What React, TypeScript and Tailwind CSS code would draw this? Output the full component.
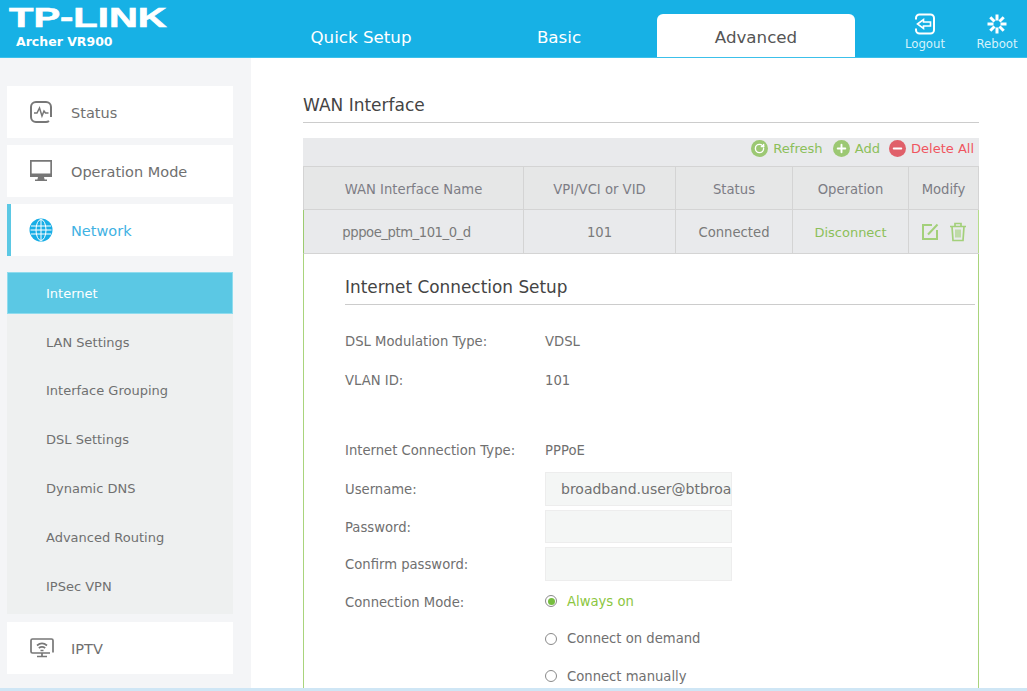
import { Minus, Plus, RotateCw } from 'lucide-react'

const font = "font-['DejaVu_Sans',sans-serif]"

function StatusIcon() {
  return (
    <svg width="24" height="24" viewBox="0 0 24 24" fill="none" stroke="#777" strokeWidth="2">
      <path d="M22 17V7a5 5 0 0 0-5-5H7a5 5 0 0 0-5 5v10a5 5 0 0 0 5 5h10a5 5 0 0 0 3-1" />
      <path d="M5 13h3l2.500-5 2.500 8 2-5 1.500 2h3" strokeWidth="1.500" />
    </svg>
  )
}

function MonitorIcon() {
  return (
    <svg width="24" height="24" viewBox="0 0 24 24" fill="#777">
      <path d="M1 1h22v17H1zM2.700 2.700v12.600h18.600V2.700z" fillRule="evenodd" />
      <rect x="2" y="14.500" width="20" height="3.500" />
      <path d="M9 18h6l.6 2.500h2.400v1.500H6v-1.500h2.400z" />
    </svg>
  )
}

function GlobeIcon() {
  return (
    <svg width="24" height="24" viewBox="0 0 24 24" fill="#18aee6" stroke="#fff" strokeWidth="1">
      <circle cx="12" cy="12" r="11.500" stroke="none" />
      <ellipse cx="12" cy="12" rx="5" ry="10.500" fill="none" />
      <path d="M12 1.500v21M2 8h20M1.500 12h21M2 16h20" fill="none" />
    </svg>
  )
}

function IptvIcon() {
  return (
    <svg width="26" height="20" viewBox="0 0 26 20" fill="none" stroke="#777" strokeWidth="1.700">
      <path d="M24 14.500V2.500a1.500 1.500 0 0 0-1.500-1.500h-19A1.500 1.500 0 0 0 2 2.500v11a1.500 1.500 0 0 0 1.500 1.500H21" />
      <path d="M13 15v3M8 18.500h10M8 7.500c3-2.500 7-2.500 10 0M9.800 10c2-1.500 4.400-1.500 6.400 0M11.500 12.500h3" />
    </svg>
  )
}

function LogoutIcon() {
  return (
    <svg width="22" height="22" viewBox="0 0 22 22" fill="none" stroke="#fff" strokeWidth="2">
      <path d="M2 6.500V5a3.500 3.500 0 0 1 3.500-3.500h11A3.500 3.500 0 0 1 20 5v12a3.500 3.500 0 0 1-3.500 3.500h-11A3.500 3.500 0 0 1 2 17v-1.500" />
      <path d="M3.500 11l6-4.500V9h7v4h-7v2.500z" strokeWidth="1.600" />
    </svg>
  )
}

function RebootIcon() {
  const angles = [0, 45, 90, 135, 180, 225, 270, 315]
  return (
    <svg width="22" height="22" viewBox="0 0 22 22" stroke="#fff" strokeWidth="3">
      {angles.map((a) => (
        <path key={a} d="M11 1.500v6" transform={`rotate(${a} 11 11)`} />
      ))}
    </svg>
  )
}

function EditIcon() {
  return (
    <svg width="18" height="18" viewBox="0 0 18 18" fill="none" stroke="#a3d07a" strokeWidth="2">
      <path d="M11 2H2v14h14V7" />
      <path d="M7 11.500L16.500 1.500" />
    </svg>
  )
}

function TrashIcon() {
  return (
    <svg width="18" height="20" viewBox="0 0 18 20" fill="none" stroke="#a3d07a" strokeWidth="1.700">
      <path d="M1 4.500h16M6 4.500V1.500h6v3M3 4.500l1 14h10l1-14" />
      <path d="M7 7.500v8M9 7.500v8M11 7.500v8" strokeWidth="1.200" />
    </svg>
  )
}

function SideItem({ label, icon, active }: { label: string; icon: React.ReactNode; active?: boolean }) {
  return (
    <div
      className={`h-[52px] bg-white flex items-center text-[14.500px] ${
        active ? 'border-l-4 border-[#5bc8e4] pl-[18px] text-[#3fb2e3]' : 'pl-[22px] text-[#707070]'
      }`}
    >
      <span className="w-[42px] flex items-center">{icon}</span>
      <span className="pt-[3px]">{label}</span>
    </div>
  )
}

function Th({ className, children }: { className: string; children: React.ReactNode }) {
  return <div className={`shrink-0 flex items-center justify-center pt-[3px] border-r border-[#d4d4d4] ${className}`}>{children}</div>
}

function FormRow({ label, className, children }: { label: string; className: string; children?: React.ReactNode }) {
  return (
    <div className={`flex items-center ${className}`}>
      <span className="w-[200px] shrink-0 pt-[2px]">{label}</span>
      {children}
    </div>
  )
}

function Radio({ label, checked }: { label: string; checked?: boolean }) {
  return (
    <span className={`flex items-center gap-[10px] ${checked ? 'text-[#8cc63f]' : ''}`}>
      <span className="w-3 h-3 rounded-full border border-[#8a8a8a] bg-white flex items-center justify-center">
        {checked && <span className="w-[7px] h-[7px] rounded-full bg-[#76bd3f]" />}
      </span>
      {label}
    </span>
  )
}

const subMenu = ['Internet', 'LAN Settings', 'Interface Grouping', 'DSL Settings', 'Dynamic DNS', 'Advanced Routing', 'IPSec VPN']

export default function App() {
  return (
    <div className={`${font} relative w-[1027px] h-[691px] overflow-hidden bg-white flex flex-col`}>
      {/* top bar */}
      <header className="h-[58px] shrink-0 bg-[#17b1e5] border-b border-[#3cc0ea] flex items-end text-white">
        <div className="w-[250px] shrink-0 self-stretch pl-[9px] pt-[3px]">
          <div className="font-['Liberation_Sans',sans-serif] font-bold text-[27px] leading-[30px] [-webkit-text-stroke:0.600px_white] scale-x-[1.480] origin-left">
            TP-LINK
          </div>
          <div className="pl-[7px] text-[12.500px] leading-[18px] font-bold">Archer VR900</div>
        </div>
        <div className="w-[407px] shrink-0 flex text-[16.700px] h-[43px] pt-[4px]">
          <div className="w-[222px] flex items-center justify-center">Quick Setup</div>
          <div className="w-[174px] flex items-center justify-center">Basic</div>
        </div>
        <div className="w-[198px] shrink-0 h-[43px] pt-[4px] bg-white rounded-t-md text-[#555] text-[16.700px] flex items-center justify-center">
          Advanced
        </div>
        <div className="flex self-stretch text-[11.700px] pl-[34px]">
          <div className="w-[72px] shrink-0 flex flex-col items-center pt-[13px] gap-[2px]">
            <LogoutIcon />
            <span className="leading-[14px] text-[#d6f1fb]">Logout</span>
          </div>
          <div className="w-[66px] shrink-0 pl-[6px] flex flex-col items-center pt-[13px] gap-[2px]">
            <RebootIcon />
            <span className="leading-[14px] text-[#d6f1fb]">Reboot</span>
          </div>
        </div>
      </header>

      <div className="flex flex-1 min-h-0">
        {/* side menu */}
        <aside className="w-[251px] shrink-0 bg-[#f4f5f7] pl-[7px] pr-[18px] pt-[28px] flex flex-col">
          <div className="flex flex-col gap-[7px]">
            <SideItem label="Status" icon={<StatusIcon />} />
            <SideItem label="Operation Mode" icon={<MonitorIcon />} />
            <SideItem label="Network" icon={<GlobeIcon />} active />
          </div>
          <div className="mt-4 h-[342px] bg-[#eef0f0] text-[13px] text-[#707070]">
            {subMenu.map((s, i) => (
              <div
                key={s}
                className={`flex items-center ${
                  i === 0 ? 'h-[42px] pl-[38px] pt-px bg-[#5bc8e4] border border-[#8fdcee] text-white mb-[4px]' : 'h-[48.800px] pl-[39px]'
                }`}
              >
                {s}
              </div>
            ))}
          </div>
          <div className="mt-[8px]">
            <SideItem label="IPTV" icon={<IptvIcon />} />
          </div>
        </aside>

        {/* main content */}
        <main className="flex-1 min-w-0 pl-[52px] pr-[48px] pt-[34px] text-[13.200px] text-[#707070]">
          <h1 className="h-[31px] text-[17px] leading-[27px] text-[#444] border-b border-[#ccc]">WAN Interface</h1>
          <div className="mt-[15px] h-[28px] pb-[6px] bg-[#e9eaec] flex items-center justify-end pr-[5px] text-[13.100px]">
            <span className="flex items-center gap-[5px] text-[#8cbf5a]">
              <span className="w-[17px] h-[17px] -mt-px rounded-full bg-[#9cc873] flex items-center justify-center">
                <RotateCw size={11} color="#fff" strokeWidth={3} />
              </span>
              Refresh
            </span>
            <span className="flex items-center gap-[5px] text-[#8cbf5a] ml-[10px]">
              <span className="w-[17px] h-[17px] -mt-px rounded-full bg-[#9cc873] flex items-center justify-center">
                <Plus size={13} color="#fff" strokeWidth={3.500} />
              </span>
              Add
            </span>
            <span className="flex items-center gap-[5px] text-[13px] text-[#f0555f] ml-[9px]">
              <span className="w-[17px] h-[17px] -mt-px rounded-full bg-[#e0606a] flex items-center justify-center">
                <Minus size={13} color="#fff" strokeWidth={3.500} />
              </span>
              Delete All
            </span>
          </div>
          <div className="flex h-[44px] bg-[#e6e7e7] border-t border-b border-l border-[#d4d4d4] text-[#7d7d85]">
            <Th className="w-[220px]">WAN Interface Name</Th>
            <Th className="w-[152px]">VPI/VCI or VID</Th>
            <Th className="w-[117px]">Status</Th>
            <Th className="w-[116px]">Operation</Th>
            <Th className="w-[70px]">Modify</Th>
          </div>
          <div className="flex h-[44px] bg-[#e9eaec] border-b border-l border-b-[#d4d4d4] border-l-[#9ccb70] text-[#7a7a7a]">
            <Th className="w-[220px] pr-[14px] tracking-[-0.450px]">pppoe_ptm_101_0_d</Th>
            <Th className="w-[152px]">101</Th>
            <Th className="w-[117px]">Connected</Th>
            <Th className="w-[116px] text-[#8cbf5a] text-[13px]">Disconnect</Th>
            <div className="w-[70px] shrink-0 flex items-center justify-center gap-[10px] border-r border-[#b6dc8c]">
              <EditIcon />
              <TrashIcon />
            </div>
          </div>

          {/* connection setup panel */}
          <section className="border-x border-[#a9d47c] pl-[41px] pr-[3px] pt-[19px] h-[500px]">
            <h2 className="h-[32px] text-[16.900px] leading-[29px] text-[#444] border-b border-[#ccc]">
              Internet Connection Setup
            </h2>
            <FormRow label="DSL Modulation Type:" className="mt-[23px] h-[26px]"><span className="pt-[2px]">VDSL</span></FormRow>
            <FormRow label="VLAN ID:" className="mt-[13px] h-[26px]"><span className="pt-[2px]">101</span></FormRow>
            <FormRow label="Internet Connection Type:" className="mt-[44px] h-[26px]"><span className="pt-[2px]">PPPoE</span></FormRow>
            <FormRow label="Username:" className="mt-[9px] h-[34px]">
              <span className="w-[187px] h-[33.500px] text-[14px] bg-[#f4f6f5] border border-[#ededed] pl-[15px] flex items-center overflow-hidden whitespace-nowrap">
                broadband.user@btbroa
              </span>
            </FormRow>
            <FormRow label="Password:" className="mt-[3.500px] h-[34px]">
              <span className="w-[187px] h-[33.500px] bg-[#f4f6f5] border border-[#ededed]" />
            </FormRow>
            <FormRow label="Confirm password:" className="mt-[3.500px] h-[34px]">
              <span className="w-[187px] h-[33.500px] bg-[#f4f6f5] border border-[#ededed]" />
            </FormRow>
            <FormRow label="Connection Mode:" className="mt-[3.500px] h-[34px]"><Radio label="Always on" checked /></FormRow>
            <FormRow label="" className="mt-[3.500px] h-[34px]"><Radio label="Connect on demand" /></FormRow>
            <FormRow label="" className="mt-[3.500px] h-[34px]"><Radio label="Connect manually" /></FormRow>
          </section>
        </main>
      </div>

      {/* window edge */}
      <div className="absolute left-0 right-0 bottom-0 h-[3px] bg-[#cfe6f5]" />
    </div>
  )
}
